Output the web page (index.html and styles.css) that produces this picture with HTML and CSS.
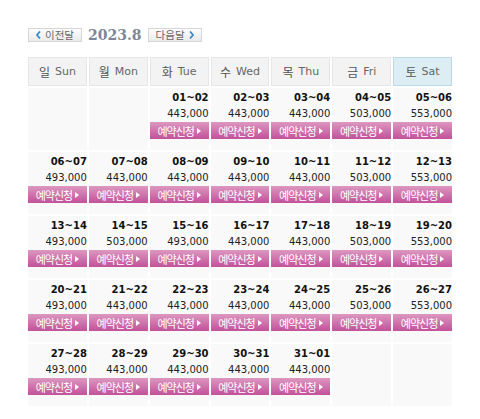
FILE: index.html
```html
<!DOCTYPE html>
<html lang="ko">
<head>
  <meta charset="UTF-8">
  <title>예약 달력</title>
  <link rel="stylesheet" href="styles.css">
</head>
<body>

<div class="wrap">
  <div class="nav">
    <a class="move"><svg class="arr" width="5" height="8" viewBox="0 0 5 8"><polyline points="4,0.5 1,4 4,7.5"/></svg>이전달</a>
    <strong class="month">2023.8</strong>
    <a class="move">다음달<svg class="arr" width="5" height="8" viewBox="0 0 5 8"><polyline points="1,0.5 4,4 1,7.5"/></svg></a>
  </div>

  <div class="cal">
    <div class="head">일 <span>Sun</span></div>
    <div class="head">월 <span>Mon</span></div>
    <div class="head">화 <span>Tue</span></div>
    <div class="head">수 <span>Wed</span></div>
    <div class="head">목 <span>Thu</span></div>
    <div class="head">금 <span>Fri</span></div>
    <div class="head sat">토 <span>Sat</span></div>

    <div class="day"></div>
    <div class="day"></div>
    <div class="day"><b>01~02</b><em>443,000</em><a class="book">예약신청</a></div>
    <div class="day"><b>02~03</b><em>443,000</em><a class="book">예약신청</a></div>
    <div class="day"><b>03~04</b><em>443,000</em><a class="book">예약신청</a></div>
    <div class="day"><b>04~05</b><em>503,000</em><a class="book">예약신청</a></div>
    <div class="day"><b>05~06</b><em>553,000</em><a class="book">예약신청</a></div>

    <div class="day"><b>06~07</b><em>493,000</em><a class="book">예약신청</a></div>
    <div class="day"><b>07~08</b><em>443,000</em><a class="book">예약신청</a></div>
    <div class="day"><b>08~09</b><em>443,000</em><a class="book">예약신청</a></div>
    <div class="day"><b>09~10</b><em>443,000</em><a class="book">예약신청</a></div>
    <div class="day"><b>10~11</b><em>443,000</em><a class="book">예약신청</a></div>
    <div class="day"><b>11~12</b><em>503,000</em><a class="book">예약신청</a></div>
    <div class="day"><b>12~13</b><em>553,000</em><a class="book">예약신청</a></div>

    <div class="day"><b>13~14</b><em>493,000</em><a class="book">예약신청</a></div>
    <div class="day"><b>14~15</b><em>503,000</em><a class="book">예약신청</a></div>
    <div class="day"><b>15~16</b><em>493,000</em><a class="book">예약신청</a></div>
    <div class="day"><b>16~17</b><em>443,000</em><a class="book">예약신청</a></div>
    <div class="day"><b>17~18</b><em>443,000</em><a class="book">예약신청</a></div>
    <div class="day"><b>18~19</b><em>503,000</em><a class="book">예약신청</a></div>
    <div class="day"><b>19~20</b><em>553,000</em><a class="book">예약신청</a></div>

    <div class="day"><b>20~21</b><em>493,000</em><a class="book">예약신청</a></div>
    <div class="day"><b>21~22</b><em>443,000</em><a class="book">예약신청</a></div>
    <div class="day"><b>22~23</b><em>443,000</em><a class="book">예약신청</a></div>
    <div class="day"><b>23~24</b><em>443,000</em><a class="book">예약신청</a></div>
    <div class="day"><b>24~25</b><em>443,000</em><a class="book">예약신청</a></div>
    <div class="day"><b>25~26</b><em>503,000</em><a class="book">예약신청</a></div>
    <div class="day"><b>26~27</b><em>553,000</em><a class="book">예약신청</a></div>

    <div class="day"><b>27~28</b><em>493,000</em><a class="book">예약신청</a></div>
    <div class="day"><b>28~29</b><em>443,000</em><a class="book">예약신청</a></div>
    <div class="day"><b>29~30</b><em>443,000</em><a class="book">예약신청</a></div>
    <div class="day"><b>30~31</b><em>443,000</em><a class="book">예약신청</a></div>
    <div class="day"><b>31~01</b><em>443,000</em><a class="book">예약신청</a></div>
    <div class="day"></div>
    <div class="day"></div>
  </div>
</div>

</body>
</html>
```

FILE: styles.css
```css
body {
  margin: 8px;
  background: #fff;
  font-family: "DejaVu Sans", "Noto Sans CJK KR", sans-serif;
}
.wrap {
  width: 424px;
  padding: 20px;
}
.nav {
  display: flex;
  align-items: center;
  gap: 5px;
  height: 14px;
  margin-bottom: 15px;
}
.move {
  display: flex;
  align-items: center;
  justify-content: center;
  gap: 4px;
  width: 52px;
  height: 12px;
  border: 1px solid #d6d6d6;
  background: linear-gradient(#fdfdfd, #ebebeb);
  font: 10.5px/12px "Noto Sans CJK KR", sans-serif;
  color: #666;
}
.arr polyline {
  fill: none;
  stroke: #3a8bd0;
  stroke-width: 1.8;
}
.month {
  font: bold 14px "DejaVu Serif", serif;
  color: #7b8797;
  margin: 0 1px;
}
.cal {
  display: grid;
  grid-template-columns: repeat(7, 1fr);
  gap: 2px;
}
.head {
  height: 27px;
  border: 1px solid #e6e6e6;
  background: #f3f3f3;
  display: flex;
  align-items: center;
  justify-content: center;
  gap: 5px;
  font: 12px "Noto Sans CJK KR", sans-serif;
  color: #555;
}
.head span {
  font: 11px "DejaVu Sans", sans-serif;
  color: #666;
}
.head.sat {
  background: #dcedf3;
  border-color: #bed9e6;
}
.day {
  height: 60px;
  padding-top: 2px;
  background: #f9f9f9;
  display: flex;
  flex-direction: column;
  text-align: right;
}
.day b {
  font: bold 10px/16px "DejaVu Sans", sans-serif;
  color: #111;
}
.day em {
  font: normal 10px/16px "DejaVu Sans", sans-serif;
  color: #222;
}
.book {
  height: 17px;
  display: flex;
  align-items: center;
  justify-content: center;
  background: linear-gradient(#dc97c0, #c2529a);
  color: #fff;
  font: 11px "Noto Sans CJK KR", sans-serif;
  letter-spacing: -1px;
}
.book::after {
  content: "";
  margin-left: 3px;
  border-left: 4px solid #fff;
  border-top: 3px solid transparent;
  border-bottom: 3px solid transparent;
}
```
